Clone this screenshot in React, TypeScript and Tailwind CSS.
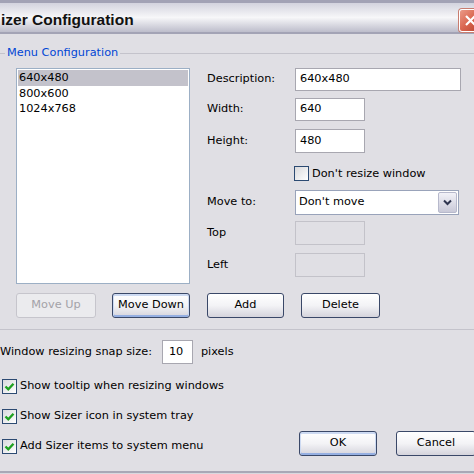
import React from "react";

const btnBase =
  "h-[25px] rounded-[3px] border flex items-center justify-center shrink-0";
const btnNormal =
  "border-[#3a4868] bg-linear-to-b from-white via-[#f3f3f6] to-[#d5d4dc] text-black";
const btnDefault =
  "border-[#3a4868] bg-linear-to-b from-white via-[#f3f3f6] to-[#d5d4dc] text-black shadow-[inset_0_1px_0_1px_#cddaf2,inset_0_-1px_0_1px_#95afe2]";

function Check({ checked }: { checked: boolean }) {
  return (
    <div className="w-[15px] h-[15px] shrink-0 border border-[#2c4a72] bg-linear-to-br from-[#d9d9dc] to-white flex items-center justify-center">
      {checked && (
        <svg width="11" height="11" viewBox="0 0 11 11">
          <path d="M1.5 5.5 L4.3 8.3 L9.5 2.8" fill="none" stroke="#21a121" strokeWidth="2.4" />
        </svg>
      )}
    </div>
  );
}

function Field({ value, w, h = 23, disabled = false }: { value?: string; w: number; h?: number; disabled?: boolean }) {
  return (
    <div
      className={
        "border flex items-center pl-[4px] shrink-0 " +
        (disabled ? "border-[#c3c2c9] bg-transparent" : "border-[#a8a7b0] bg-white")
      }
      style={{ width: w, height: h }}
    >
      {value}
    </div>
  );
}

export default function App() {
  return (
    <div className="w-[474px] h-[474px] overflow-hidden bg-[#e0dfe4] flex flex-col text-[11.3px] text-black font-['DejaVu_Sans',sans-serif]">
      {/* title bar */}
      <div className="h-[34px] shrink-0 flex items-center border-t-[3px] border-t-[#a2a2b5] border-b-[2px] border-b-[#a3a3b5] bg-linear-to-b from-[#d3d3de] via-[#f7f7f9] to-[#bdbdcb]">
        <span className="ml-[1px] pt-[4px] font-['Liberation_Sans',sans-serif] font-bold text-[15.5px] text-[#111]">
          izer Configuration
        </span>
        <div className="ml-auto -mr-[8px] mt-[6px] w-[23px] h-[23px] rounded-[3px] border border-white bg-linear-to-br from-[#ea9a88] via-[#d9654f] to-[#b8402c] flex items-center justify-center shadow-[0_0_0_1px_#c87d70]">
          <svg width="13" height="13" viewBox="0 0 13 13">
            <path d="M2 2 L11 11 M11 2 L2 11" stroke="white" strokeWidth="2.2" />
          </svg>
        </div>
      </div>

      {/* body */}
      <div className="flex-1 flex flex-col">
        <fieldset className="mt-[12px] -ml-[4px] w-[490px] border border-[#c4c3cb] rounded-[3px] pb-[11px]">
          <legend className="ml-[8px] px-[2px] leading-[14px] text-[#0046d5]">Menu Configuration</legend>
          <div className="flex flex-col pt-[8px] pl-[19px]">
            <div className="flex">
              <div className="w-[174px] h-[216px] border border-[#9cafc5] bg-white p-[1px] shrink-0">
                <div className="h-[15.5px] leading-[15.5px] pl-[1px] bg-[#c3c2cb]">640x480</div>
                <div className="h-[15.5px] leading-[15.5px] pl-[1px]">800x600</div>
                <div className="h-[15.5px] leading-[15.5px] pl-[1px]">1024x768</div>
              </div>
              <div className="ml-[17px] flex flex-col">
                <div className="h-[30px] flex items-start">
                  <div className="w-[88px] h-[23px] flex items-center">Description:</div>
                  <Field value="640x480" w={166} />
                </div>
                <div className="h-[31px] flex items-start">
                  <div className="w-[88px] h-[23px] flex items-center">Width:</div>
                  <Field value="640" w={70} />
                </div>
                <div className="h-[31px] flex items-start">
                  <div className="w-[88px] h-[24px] flex items-center">Height:</div>
                  <Field value="480" w={70} h={24} />
                </div>
                <div className="h-[30px] flex items-start pt-[6px]">
                  <div className="w-[87px]" />
                  <Check checked={false} />
                  <span className="ml-[3px] leading-[15px]">Don't resize window</span>
                </div>
                <div className="h-[31px] flex items-start">
                  <div className="w-[88px] h-[25px] flex items-center">Move to:</div>
                  <div className="w-[164px] h-[25px] border border-[#99a3ba] bg-white flex items-center pl-[3px] pr-[1px]">
                    <span className="flex-1">Don't move</span>
                    <div className="w-[19px] h-[21px] rounded-[2px] border border-[#b7b9cc] bg-linear-to-b from-[#f2f2f8] to-[#c9c9d8] flex items-center justify-center">
                      <svg width="9" height="7" viewBox="0 0 9 7">
                        <path d="M1 1.5 L4.5 5 L8 1.5" fill="none" stroke="#2f3550" strokeWidth="2" />
                      </svg>
                    </div>
                  </div>
                </div>
                <div className="h-[32px] flex items-start">
                  <div className="w-[88px] h-[24px] flex items-center">Top</div>
                  <Field w={70} h={24} disabled />
                </div>
                <div className="flex items-start">
                  <div className="w-[88px] h-[24px] flex items-center">Left</div>
                  <Field w={70} h={24} disabled />
                </div>
              </div>
            </div>
            <div className="flex mt-[9px]">
              <div className={btnBase + " w-[80px] border-[#c6c5cc] bg-[#ebebee] text-[#a3a2a8]"}>Move Up</div>
              <div className={btnBase + " ml-[16px] w-[78px] " + btnDefault}>Move Down</div>
              <div className={btnBase + " ml-[17px] w-[77px] " + btnNormal}>Add</div>
              <div className={btnBase + " ml-[17px] w-[79px] " + btnNormal}>Delete</div>
            </div>
          </div>
        </fieldset>

        <div className="mt-[10px] h-[24px] flex items-center">
          <span>Window resizing snap size:</span>
          <div className="ml-[10px] w-[31px] h-[24px] border border-[#a8a7b0] bg-white flex items-center pl-[6px]">10</div>
          <span className="ml-[8px]">pixels</span>
        </div>

        <div className="mt-[7px] h-[30px] flex items-center pl-[2px]">
          <Check checked />
          <span className="ml-[3px]">Show tooltip when resizing windows</span>
        </div>
        <div className="h-[30px] flex items-center pl-[2px]">
          <Check checked />
          <span className="ml-[3px]">Show Sizer icon in system tray</span>
        </div>
        <div className="h-[31px] flex items-start">
          <div className="h-[31px] flex items-center pl-[2px]">
            <Check checked />
            <span className="ml-[3px]">Add Sizer items to system menu</span>
          </div>
          <div className="ml-auto -mr-[2px] flex">
            <div className={btnBase + " w-[78px] " + btnDefault}>OK</div>
            <div className={btnBase + " ml-[19px] w-[80px] " + btnNormal}>Cancel</div>
          </div>
        </div>

        <div className="mt-auto h-[3px] border-t-2 border-[#a9a8b6] bg-[#d9d9df]" />
      </div>
    </div>
  );
}
